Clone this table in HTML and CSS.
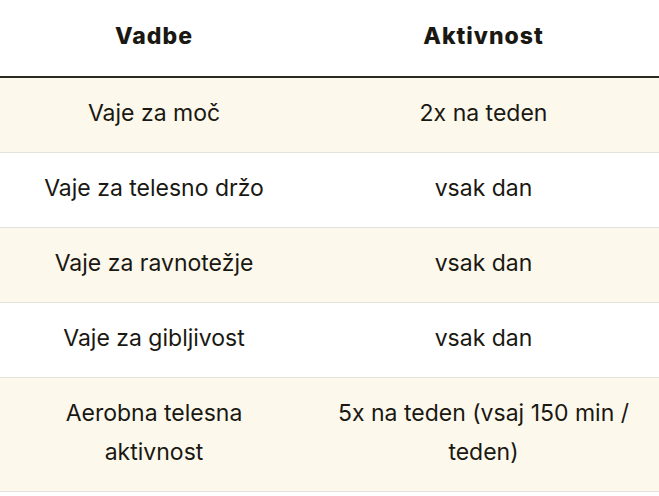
FILE: index.html
```html
<!DOCTYPE html>
<html lang="sl">
<head>
<meta charset="utf-8">
<title>Vadbe</title>
<link rel="stylesheet" href="styles.css">
</head>
<body>
<table class="plan">
  <colgroup>
    <col class="col-left">
    <col class="col-right">
  </colgroup>
  <thead>
    <tr><th>Vadbe</th><th>Aktivnost</th></tr>
  </thead>
  <tbody>
    <tr class="alt"><td>Vaje za moč</td><td>2x na teden</td></tr>
    <tr><td>Vaje za telesno držo</td><td>vsak dan</td></tr>
    <tr class="alt"><td>Vaje za ravnotežje</td><td>vsak dan</td></tr>
    <tr><td>Vaje za gibljivost</td><td>vsak dan</td></tr>
    <tr class="alt"><td>Aerobna telesna aktivnost</td><td>5x na teden (vsaj 150 min / teden)</td></tr>
  </tbody>
</table>
</body>
</html>
```
FILE: styles.css
```css
html, body {
  margin: 0;
  padding: 0;
  background: #ffffff;
}
body {
  font-family: "Inter", "Liberation Sans", sans-serif;
  color: #1a1812;
}
.plan {
  width: 659px;
  border-collapse: collapse;
  table-layout: fixed;
  font-size: 23px;
  line-height: 39px;
}
.col-left {
  width: 308px;
}
.col-right {
  width: 351px;
}
.plan th,
.plan td {
  text-align: center;
  padding: 16px 20px 19px;
  vertical-align: middle;
}
.plan th {
  font-weight: 800;
  letter-spacing: 1px;
  line-height: 40px;
  padding-top: 16px;
  padding-bottom: 20px;
  border-bottom: 2px solid #2b2a20;
}
.plan td {
  font-weight: 400;
  border-bottom: 1px solid #e4e2dc;
}
.plan tr.alt td {
  background: #fdf8ec;
}
```
